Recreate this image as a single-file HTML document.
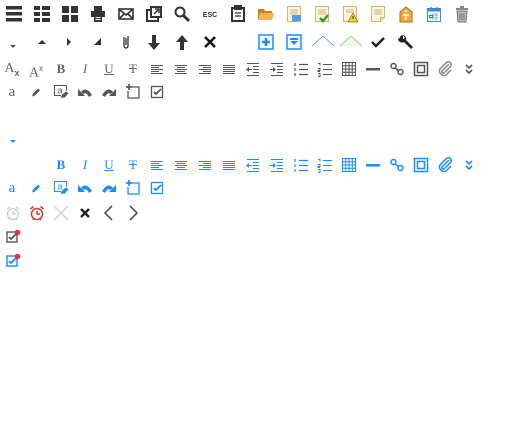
<!DOCTYPE html>
<html><head><meta charset="utf-8"><style>
html,body{margin:0;padding:0;background:#fff;width:516px;height:448px;overflow:hidden;position:relative;font-family:"Liberation Serif",serif}
svg{position:absolute;width:16px;height:16px;overflow:visible}
.k{color:#333}.g{color:#555}.b{color:#1a8cff}
.t{position:absolute;width:20px;text-align:center;font-size:14px;line-height:16px}
.t.g{color:#666}
</style></head><body>
<!-- Row 1 -->
<svg class="k" style="left:6px;top:6px" viewBox="0 0 16 16" fill="currentColor"><rect x="0" y="0" width="16" height="3.5"/><rect x="0" y="6" width="16" height="3.5"/><rect x="0" y="12" width="16" height="3.5"/></svg>
<svg class="k" style="left:34px;top:6px" viewBox="0 0 16 16" fill="currentColor"><rect x="0" y="0" width="6" height="4"/><rect x="8" y="0" width="8" height="4"/><rect x="0" y="6" width="6" height="4"/><rect x="8" y="6" width="8" height="4"/><rect x="0" y="12" width="6" height="4"/><rect x="8" y="12" width="8" height="4"/></svg>
<svg class="k" style="left:62px;top:6px" viewBox="0 0 16 16" fill="currentColor"><rect x="0" y="0" width="7" height="7"/><rect x="9" y="0" width="7" height="7"/><rect x="0" y="9" width="7" height="7"/><rect x="9" y="9" width="7" height="7"/></svg>
<svg class="k" style="left:90px;top:6px" viewBox="0 0 16 16" fill="currentColor"><rect x="4" y="0" width="8" height="5"/><rect x="1" y="5" width="14" height="6"/><rect x="4" y="9" width="8" height="7"/><rect x="5.5" y="11" width="5" height="1" fill="#fff"/><rect x="5.5" y="13" width="5" height="1" fill="#fff"/></svg>
<svg class="k" style="left:118px;top:6px" viewBox="0 0 16 16" fill="none" stroke="currentColor" stroke-width="1.6"><rect x="1" y="3" width="14" height="10"/><path d="M1 3l7 6 7-6M1 13l5-5M15 13l-5-5"/></svg>
<svg class="k" style="left:146px;top:6px" viewBox="0 0 16 16" fill="none" stroke="currentColor" stroke-width="2"><path d="M5 4H1v11h11v-4"/><rect x="5" y="1" width="10" height="10"/><path d="M8 8l5-5M9 3h4v4" stroke-width="1.5"/></svg>
<svg class="k" style="left:174px;top:6px" viewBox="0 0 16 16" fill="none" stroke="currentColor"><circle cx="6" cy="6" r="4.5" stroke-width="2"/><path d="M9.5 9.5l5.5 5.5" stroke-width="3"/></svg>
<svg class="k" style="left:202px;top:6px" viewBox="0 0 16 16"><text x="8" y="11" font-family="Liberation Sans,sans-serif" font-size="7" font-weight="bold" text-anchor="middle" fill="currentColor">ESC</text></svg>
<svg class="k" style="left:230px;top:6px" viewBox="0 0 16 16" fill="none" stroke="currentColor" stroke-width="2"><rect x="2" y="2" width="12" height="13"/><rect x="5" y="0" width="6" height="3" fill="currentColor"/><path d="M5 7h6M5 10h6" stroke-width="1.3"/></svg>
<svg style="left:258px;top:6px" viewBox="0 0 16 16"><path d="M0 3h6l1 2h7v9H0z" fill="#c9822a"/><path d="M2 7h14l-2 7H0z" fill="#f4b356"/></svg>
<svg style="left:286px;top:6px" viewBox="0 0 16 16"><rect x="1.5" y=".5" width="13" height="15" fill="#fdf6dc" stroke="#d2b56a"/><path d="M4 4h8M4 6h8M4 8h8" stroke="#c9b57d"/><rect x="6" y="9" width="9" height="6" fill="#4aa0e8"/><path d="M10 15v1" stroke="#2266aa"/></svg>
<svg style="left:314px;top:6px" viewBox="0 0 16 16"><rect x="1.5" y=".5" width="13" height="15" fill="#fdf6dc" stroke="#d2b56a"/><path d="M4 4h8M4 6h8M4 8h8" stroke="#c9b57d"/><path d="M6 12l3 3 5-6" stroke="#2aa02a" stroke-width="2.5" fill="none"/></svg>
<svg style="left:342px;top:6px" viewBox="0 0 16 16"><rect x="1.5" y=".5" width="13" height="15" fill="#fdf6dc" stroke="#d2b56a"/><path d="M4 4h8M4 6h8" stroke="#c9b57d"/><path d="M11 7l5 9H6z" fill="#f5d230" stroke="#8a6d00" stroke-width=".7"/><path d="M11 10v3" stroke="#333"/></svg>
<svg style="left:370px;top:6px" viewBox="0 0 16 16"><path d="M1.5 .5h13v11l-4 4h-9z" fill="#fdf6dc" stroke="#d2b56a"/><path d="M4 4h8M4 6h8M4 8h8" stroke="#c9b57d"/><path d="M10.5 15.5v-4h4" fill="#eadba0" stroke="#d2b56a"/></svg>
<svg style="left:398px;top:6px" viewBox="0 0 16 16"><path d="M8 1l6 5v10H2V6z" fill="#f4a73a" stroke="#b86d10"/><circle cx="8" cy="5" r="1.2" fill="#fff"/><path d="M5 9h6M8 9v5" stroke="#fff" stroke-width="1.5"/></svg>
<svg style="left:426px;top:6px" viewBox="0 0 16 16"><rect x="1.5" y="2.5" width="13" height="13" fill="#eef6ff" stroke="#3a8ad6"/><rect x="1.5" y="2.5" width="13" height="3" fill="#3a8ad6"/><path d="M5 1v3M11 1v3" stroke="#3a8ad6" stroke-width="1.5"/><path d="M4 9h8M4 12h8M7 7v7M10 7v7" stroke="#8ab8e8"/><rect x="3.5" y="9.5" width="3" height="2" fill="none" stroke="#2a2"/></svg>
<svg style="left:454px;top:6px" viewBox="0 0 16 16"><rect x="2" y="2" width="12" height="2" fill="#888"/><rect x="6" y="0" width="4" height="2" fill="#888"/><path d="M3 5h10l-1 11H4z" fill="#bbb" stroke="#777"/><path d="M6 7v7M8 7v7M10 7v7" stroke="#777"/></svg>
<!-- Row 2 -->
<svg class="k" style="left:5px;top:37px" viewBox="0 0 16 16" fill="#555"><path d="M5 8h6l-3 3z"/></svg>
<svg class="k" style="left:34px;top:34px" viewBox="0 0 16 16" fill="currentColor"><path d="M4 10h8L8 6z"/></svg>
<svg class="k" style="left:61px;top:34px" viewBox="0 0 16 16" fill="currentColor"><path d="M6 4v8l4-4z"/></svg>
<svg class="k" style="left:89px;top:34px" viewBox="0 0 16 16" fill="currentColor"><path d="M5 11h7V4z"/></svg>
<svg class="k" style="left:118px;top:34px" viewBox="0 0 16 16" fill="none" stroke="currentColor" stroke-width="1.3"><path d="M6 3v9a2 2 0 0 0 4 0V2M8 4v7"/></svg>
<svg class="k" style="left:146px;top:34px" viewBox="0 0 16 16" fill="currentColor"><path d="M6 1h4v8h4l-6 7-6-7h4z"/></svg>
<svg class="k" style="left:174px;top:34px" viewBox="0 0 16 16" fill="currentColor"><path d="M6 16h4V8h4L8 1 2 8h4z"/></svg>
<svg style="left:202px;top:34px" viewBox="0 0 16 16" stroke="#111" stroke-width="2.5"><path d="M3 3l10 10M13 3L3 13"/></svg>
<svg style="left:258px;top:34px" viewBox="0 0 16 16"><rect x="1" y="1" width="14" height="14" fill="#fff" stroke="#1a8cff" stroke-width="1.5"/><path d="M8 4v8M4 8h8" stroke="#1a8cff" stroke-width="2.5"/></svg>
<svg style="left:286px;top:34px" viewBox="0 0 16 16"><rect x="1" y="1" width="14" height="14" fill="#fff" stroke="#1a8cff" stroke-width="1.5"/><rect x="4" y="4" width="8" height="2" fill="#1a8cff"/><path d="M4 7h8l-4 4z" fill="#1a8cff"/></svg>
<svg style="left:312px;top:34px;width:22px" viewBox="0 0 22 16"><path d="M0 12L11 2l11 10" fill="none" stroke="#1a8cff" stroke-dasharray="1 .5"/></svg>
<svg style="left:340px;top:34px;width:22px" viewBox="0 0 22 16"><path d="M0 12L11 2l11 10z" fill="#eef9ea"/><path d="M0 12L11 2l11 10" fill="none" stroke="#9ad48a"/></svg>
<svg style="left:370px;top:34px" viewBox="0 0 16 16"><path d="M2 8l4 4 8-8" fill="none" stroke="#222" stroke-width="2.5"/></svg>
<svg style="left:398px;top:34px" viewBox="0 0 16 16"><path d="M5 1a4 4 0 0 0-3 6L1 4l-1 1a4 4 0 0 0 6 3l7 7 2-2-7-7a4 4 0 0 0-3-5l2 3-2 1z" fill="#222"/></svg>
<!-- Row 3 -->
<div class="t g" style="left:2px;top:61px">A<sub style="font-size:9px;font-family:Liberation Sans,sans-serif;font-weight:bold">x</sub></div>
<div class="t g" style="left:26px;top:61px">A<sup style="font-size:8px;font-family:Liberation Sans,sans-serif">x</sup></div>
<div class="t g" style="left:51px;top:61px;font-weight:bold;font-size:13px">B</div>
<div class="t g" style="left:75px;top:61px;font-style:italic;font-size:13px">I</div>
<div class="t g" style="left:99px;top:61px;text-decoration:underline;font-size:13px">U</div>
<div class="t g" style="left:123px;top:61px;text-decoration:line-through;font-size:13px">T</div>
<div class="t g" style="left:2px;top:84px;font-size:15px">a</div>
<div class="t b" style="left:51px;top:157px;font-weight:bold;font-size:13px">B</div>
<div class="t b" style="left:75px;top:157px;font-style:italic;font-size:13px">I</div>
<div class="t b" style="left:99px;top:157px;text-decoration:underline;font-size:13px">U</div>
<div class="t b" style="left:123px;top:157px;text-decoration:line-through;font-size:13px">T</div>
<div class="t b" style="left:2px;top:180px;font-size:15px">a</div>
<svg class="g" style="left:149px;top:61px" viewBox="0 0 16 16" stroke="currentColor"><path d="M2 4.5h12M2 6.5h8M2 8.5h12M2 10.5h8M2 12.5h12"/></svg>
<svg class="g" style="left:173px;top:61px" viewBox="0 0 16 16" stroke="currentColor"><path d="M2 4.5h12M4 6.5h8M2 8.5h12M4 10.5h8M2 12.5h12"/></svg>
<svg class="g" style="left:197px;top:61px" viewBox="0 0 16 16" stroke="currentColor"><path d="M2 4.5h12M6 6.5h8M2 8.5h12M6 10.5h8M2 12.5h12"/></svg>
<svg class="g" style="left:221px;top:61px" viewBox="0 0 16 16" stroke="currentColor"><path d="M2 4.5h12M2 6.5h12M2 8.5h12M2 10.5h12M2 12.5h12"/></svg>
<svg class="g" style="left:245px;top:61px" viewBox="0 0 16 16" stroke="currentColor"><path d="M2 2.5h12M8 5.5h6M8 8.5h6M8 11.5h6M2 14.5h12"/><path d="M1 8.5l3-2.5v5z M4 8h3v1H4z" fill="currentColor" stroke="none"/></svg>
<svg class="g" style="left:269px;top:61px" viewBox="0 0 16 16" stroke="currentColor"><path d="M2 2.5h12M8 5.5h6M8 8.5h6M8 11.5h6M2 14.5h12"/><path d="M7 8.5l-3-2.5v5z M1 8h3v1H1z" fill="currentColor" stroke="none"/></svg>
<svg class="g" style="left:293px;top:61px" viewBox="0 0 16 16" stroke="currentColor"><path d="M6 3.5h9M6 8.5h9M6 13.5h9M2 2v3M2 7v3M2 12v3" stroke-width="1.2"/></svg>
<svg class="g" style="left:317px;top:61px" viewBox="0 0 16 16" stroke="currentColor"><path d="M6 3.5h9M6 8.5h9M6 13.5h9M1 2.5h2v2M1 7.5h2v2H1v1h2M1 12.5h2v3H1" stroke-width="1" fill="none"/></svg>
<svg class="g" style="left:341px;top:61px" viewBox="0 0 16 16" stroke="currentColor" fill="none"><rect x="1.5" y="1.5" width="13" height="13"/><path d="M4.75 1.5v13M8 1.5v13M11.25 1.5v13M1.5 4.75h13M1.5 8h13M1.5 11.25h13"/></svg>
<svg class="g" style="left:365px;top:61px" viewBox="0 0 16 16"><rect x="1" y="7" width="14" height="2.5" fill="currentColor"/></svg>
<svg class="g" style="left:389px;top:61px" viewBox="0 0 16 16" fill="none" stroke="currentColor" stroke-width="1.5"><circle cx="4.5" cy="5" r="2.5"/><circle cx="11.5" cy="11" r="2.5"/><path d="M6 7l4 3"/></svg>
<svg class="g" style="left:413px;top:61px" viewBox="0 0 16 16" fill="none" stroke="currentColor" stroke-width="1.5"><rect x="1.5" y="1.5" width="13" height="13"/><rect x="4.5" y="4.5" width="7" height="7"/></svg>
<svg style="left:437px;top:61px" viewBox="0 0 16 16" fill="none" stroke="#888" stroke-width="1.5"><path d="M12 3L5 10a1.5 1.5 0 0 0 2 2l7-7a3 3 0 0 0-4-4L3 8a4.5 4.5 0 0 0 6 6l5-5"/></svg>
<svg class="g" style="left:461px;top:61px" viewBox="0 0 16 16" fill="none" stroke="currentColor" stroke-width="1.6"><path d="M5 4l3 3 3-3M5 9l3 3 3-3"/></svg>

<svg class="b" style="left:149px;top:157px" viewBox="0 0 16 16" stroke="currentColor"><path d="M2 4.5h12M2 6.5h8M2 8.5h12M2 10.5h8M2 12.5h12"/></svg>
<svg class="b" style="left:173px;top:157px" viewBox="0 0 16 16" stroke="currentColor"><path d="M2 4.5h12M4 6.5h8M2 8.5h12M4 10.5h8M2 12.5h12"/></svg>
<svg class="b" style="left:197px;top:157px" viewBox="0 0 16 16" stroke="currentColor"><path d="M2 4.5h12M6 6.5h8M2 8.5h12M6 10.5h8M2 12.5h12"/></svg>
<svg class="b" style="left:221px;top:157px" viewBox="0 0 16 16" stroke="currentColor"><path d="M2 4.5h12M2 6.5h12M2 8.5h12M2 10.5h12M2 12.5h12"/></svg>
<svg class="b" style="left:245px;top:157px" viewBox="0 0 16 16" stroke="currentColor"><path d="M2 2.5h12M8 5.5h6M8 8.5h6M8 11.5h6M2 14.5h12"/><path d="M1 8.5l3-2.5v5z M4 8h3v1H4z" fill="currentColor" stroke="none"/></svg>
<svg class="b" style="left:269px;top:157px" viewBox="0 0 16 16" stroke="currentColor"><path d="M2 2.5h12M8 5.5h6M8 8.5h6M8 11.5h6M2 14.5h12"/><path d="M7 8.5l-3-2.5v5z M1 8h3v1H1z" fill="currentColor" stroke="none"/></svg>
<svg class="b" style="left:293px;top:157px" viewBox="0 0 16 16" stroke="currentColor"><path d="M6 3.5h9M6 8.5h9M6 13.5h9M2 2v3M2 7v3M2 12v3" stroke-width="1.2"/></svg>
<svg class="b" style="left:317px;top:157px" viewBox="0 0 16 16" stroke="currentColor"><path d="M6 3.5h9M6 8.5h9M6 13.5h9M1 2.5h2v2M1 7.5h2v2H1v1h2M1 12.5h2v3H1" stroke-width="1" fill="none"/></svg>
<svg class="b" style="left:341px;top:157px" viewBox="0 0 16 16" stroke="currentColor" fill="none"><rect x="1.5" y="1.5" width="13" height="13"/><path d="M4.75 1.5v13M8 1.5v13M11.25 1.5v13M1.5 4.75h13M1.5 8h13M1.5 11.25h13"/></svg>
<svg class="b" style="left:365px;top:157px" viewBox="0 0 16 16"><rect x="1" y="7" width="14" height="2.5" fill="currentColor"/></svg>
<svg class="b" style="left:389px;top:157px" viewBox="0 0 16 16" fill="none" stroke="currentColor" stroke-width="1.5"><circle cx="4.5" cy="5" r="2.5"/><circle cx="11.5" cy="11" r="2.5"/><path d="M6 7l4 3"/></svg>
<svg class="b" style="left:413px;top:157px" viewBox="0 0 16 16" fill="none" stroke="currentColor" stroke-width="1.5"><rect x="1.5" y="1.5" width="13" height="13"/><rect x="4.5" y="4.5" width="7" height="7"/></svg>
<svg class="b" style="left:437px;top:157px" viewBox="0 0 16 16" fill="none" stroke="currentColor" stroke-width="1.5"><path d="M12 3L5 10a1.5 1.5 0 0 0 2 2l7-7a3 3 0 0 0-4-4L3 8a4.5 4.5 0 0 0 6 6l5-5"/></svg>
<svg class="b" style="left:461px;top:157px" viewBox="0 0 16 16" fill="none" stroke="currentColor" stroke-width="1.6"><path d="M5 4l3 3 3-3M5 9l3 3 3-3"/></svg>

<!-- Row 4 (gray) & Row 7 (blue) -->
<svg class="g" style="left:28px;top:84px" viewBox="0 0 16 16"><path d="M4 12.5l1-3 5-5 2 2-5 5z" fill="currentColor"/></svg>
<svg class="g" style="left:53px;top:84px" viewBox="0 0 16 16"><rect x="1.5" y="1.5" width="12" height="10" fill="none" stroke="currentColor"/><text x="7" y="9.5" font-size="9" text-anchor="middle" fill="currentColor" font-family="Liberation Sans,sans-serif">a</text><path d="M7 14l2-4 4-3 3 2-4 5z" fill="currentColor" stroke="#fff" stroke-width=".8"/></svg>
<svg class="g" style="left:77px;top:84px" viewBox="0 0 16 16"><path d="M5.5 9Q9 4.5 13.5 12" fill="none" stroke="currentColor" stroke-width="3.5"/><path d="M1 5l0 7h7z" fill="currentColor"/></svg>
<svg class="g" style="left:101px;top:84px" viewBox="0 0 16 16"><path d="M10.5 9Q7 4.5 2.5 12" fill="none" stroke="currentColor" stroke-width="3.5"/><path d="M15 5v7H8z" fill="currentColor"/></svg>
<svg class="g" style="left:125px;top:84px" viewBox="0 0 16 16" fill="none" stroke="currentColor" stroke-width="1.3"><path d="M7 3h7v11H3V7"/><path d="M4 0v6M1 3h6" stroke-width="1.8"/></svg>
<svg class="g" style="left:149px;top:84px" viewBox="0 0 16 16" fill="none" stroke="currentColor" stroke-width="1.3"><rect x="2.5" y="2.5" width="11" height="11"/><path d="M5 8l2 2 5-5" stroke-width="1.8"/></svg>

<svg class="b" style="left:28px;top:180px" viewBox="0 0 16 16"><path d="M4 12.5l1-3 5-5 2 2-5 5z" fill="currentColor"/></svg>
<svg class="b" style="left:53px;top:180px" viewBox="0 0 16 16"><rect x="1.5" y="1.5" width="12" height="10" fill="none" stroke="currentColor"/><text x="7" y="9.5" font-size="9" text-anchor="middle" fill="currentColor" font-family="Liberation Sans,sans-serif">a</text><path d="M7 14l2-4 4-3 3 2-4 5z" fill="currentColor" stroke="#fff" stroke-width=".8"/></svg>
<svg class="b" style="left:77px;top:180px" viewBox="0 0 16 16"><path d="M5.5 9Q9 4.5 13.5 12" fill="none" stroke="currentColor" stroke-width="3.5"/><path d="M1 5l0 7h7z" fill="currentColor"/></svg>
<svg class="b" style="left:101px;top:180px" viewBox="0 0 16 16"><path d="M10.5 9Q7 4.5 2.5 12" fill="none" stroke="currentColor" stroke-width="3.5"/><path d="M15 5v7H8z" fill="currentColor"/></svg>
<svg class="b" style="left:125px;top:180px" viewBox="0 0 16 16" fill="none" stroke="currentColor" stroke-width="1.3"><path d="M7 3h7v11H3V7"/><path d="M4 0v6M1 3h6" stroke-width="1.8"/></svg>
<svg class="b" style="left:149px;top:180px" viewBox="0 0 16 16" fill="none" stroke="currentColor" stroke-width="1.3"><rect x="2.5" y="2.5" width="11" height="11"/><path d="M5 8l2 2 5-5" stroke-width="1.8"/></svg>

<svg style="left:5px;top:133px" viewBox="0 0 16 16"><path d="M5 7h6l-3 3z" fill="#1a8cff"/></svg>

<!-- Row 8 -->
<svg style="left:5px;top:205px" viewBox="0 0 16 16" fill="none" stroke="#ccc" stroke-width="1.3"><circle cx="8" cy="9" r="5.5"/><path d="M8 6v3h3M2 4l3-2M14 4l-3-2M4 15l1-2M12 15l-1-2"/></svg>
<svg style="left:29px;top:205px" viewBox="0 0 16 16" fill="none" stroke="#d33" stroke-width="1.5"><circle cx="8" cy="9" r="5.5"/><path d="M8 6v3h3M1.5 4l3-2.5M14.5 4l-3-2.5M4 15l1-2M12 15l-1-2"/></svg>
<svg style="left:53px;top:205px" viewBox="0 0 16 16" stroke="#ddd" stroke-width="2"><path d="M1 1l14 14M15 1L1 15"/></svg>
<svg style="left:77px;top:205px" viewBox="0 0 16 16" stroke="#222" stroke-width="2.5"><path d="M4 4l8 8M12 4l-8 8"/></svg>
<svg style="left:101px;top:205px" viewBox="0 0 16 16" fill="none" stroke="#555" stroke-width="1.6"><path d="M11 1L4 8l7 7"/></svg>
<svg style="left:125px;top:205px" viewBox="0 0 16 16" fill="none" stroke="#555" stroke-width="1.6"><path d="M5 1l7 7-7 7"/></svg>

<!-- Row 9,10 -->
<svg style="left:5px;top:229px" viewBox="0 0 16 16"><rect x="2" y="3" width="10" height="10" fill="none" stroke="#555" stroke-width="1.4"/><path d="M4 8l2 2 5-5" fill="none" stroke="#555" stroke-width="1.8"/><circle cx="12.5" cy="3.5" r="2.8" fill="#e0303a"/></svg>
<svg style="left:5px;top:253px" viewBox="0 0 16 16"><rect x="2" y="3" width="10" height="10" fill="none" stroke="#1a8cff" stroke-width="1.4"/><path d="M4 8l2 2 5-5" fill="none" stroke="#1a8cff" stroke-width="1.8"/><circle cx="12.5" cy="3.5" r="2.8" fill="#e0303a"/></svg>
</body></html>
